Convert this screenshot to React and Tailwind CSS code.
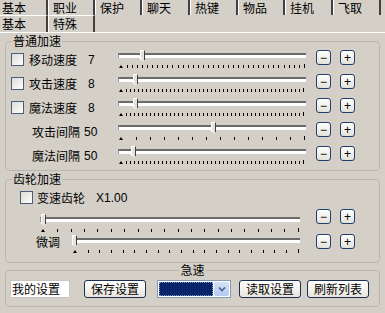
import React from "react";

const row1Tabs = [
  { t: "基本", w: "w-[48px]", first: true },
  { t: "职业", w: "w-[47px]" },
  { t: "保护", w: "w-[47px]" },
  { t: "聊天", w: "w-[48px]" },
  { t: "热键", w: "w-[48px]" },
  { t: "物品", w: "w-[47px]" },
  { t: "挂机", w: "w-[48px]" },
  { t: "飞取", w: "w-[48px]" },
];

// 滑块
function Slider({ width, thumb, ticks }) {
  return (
    <div className={`relative h-[18px] ${width}`}>
      <div className="mt-[3px] h-[5px] border-t-2 border-t-[#6b6b6b] border-l border-l-[#9a9a9a] bg-white" />
      <div className="mt-[6px] h-[4px] flex justify-between items-end pl-[1px] pr-[1px]">
        {Array.from({ length: ticks }).map((_, i) =>
          i === 0 ? (
            <div key={i} className="w-0 h-0 border-l-[2px] border-r-[2px] border-b-[3px] border-l-transparent border-r-transparent border-b-black" />
          ) : (
            <div key={i} className={`w-[1px] bg-black ${i === ticks - 1 ? "h-[4px]" : "h-[3px]"}`} />
          )
        )}
      </div>
      <div
        className="absolute top-0 w-[5px] h-[12px] bg-[#e6e3dc] border-l border-l-white border-r border-r-[#404040] border-t border-t-white [clip-path:polygon(0_0,100%_0,100%_78%,50%_100%,0_78%)]"
        style={{ left: thumb }}
      />
    </div>
  );
}

function PmButton({ children, className = "" }) {
  return (
    <div
      className={`w-[15px] h-[15px] rounded-[3px] border border-[#1f3f6e] bg-gradient-to-b from-white to-[#e4e1d8] flex items-center justify-center text-[12px] leading-none text-black font-['Liberation_Sans',sans-serif] ${className}`}
    >
      {children}
    </div>
  );
}

function CheckBox({ className = "" }) {
  return (
    <div className={`w-[13px] h-[13px] border border-[#4b5d77] bg-gradient-to-br from-[#dcdcd6] to-white ${className}`} />
  );
}

function XpButton({ children, className = "" }) {
  return (
    <div
      className={`h-[18px] rounded-[3px] border border-[#1c2f4e] bg-gradient-to-b from-white to-[#e8e5dd] flex items-center justify-center text-[12px] leading-[14px] text-black ${className}`}
    >
      {children}
    </div>
  );
}

const speedRows = [
  { label: "移动速度", val: "7", check: true, thumb: 22, ticks: 37 },
  { label: "攻击速度", val: "8", check: true, thumb: 15, ticks: 46 },
  { label: "魔法速度", val: "8", check: true, thumb: 15, ticks: 46 },
  { label: "攻击间隔", val: "50", check: false, thumb: 93, ticks: 14 },
  { label: "魔法间隔", val: "50", check: false, thumb: 13, ticks: 46 },
];

const num = "font-['Liberation_Sans',sans-serif] text-[12px]";

export default function App() {
  return (
    <div className="w-[385px] h-[313px] overflow-hidden bg-[#d4d0c8] text-black text-[12px] leading-[14px] font-['Noto_Sans_CJK_SC','Liberation_Sans',sans-serif]">
      {/* 标签页 第一行 */}
      <div className="flex h-[15px]">
        {row1Tabs.map((tab, i) => (
          <div
            key={i}
            className={`${tab.w} h-[15px] pt-[1px] border-r-2 border-r-[#404040] ${tab.first ? "pl-[2px]" : "border-l border-l-white pl-[4px]"}`}
          >
            {tab.t}
          </div>
        ))}
      </div>
      {/* 第二行 */}
      <div className="flex h-[17px]">
        <div className="w-[48px] h-[17px] border-t border-t-white border-r-2 border-r-[#404040] pl-[2px] pt-[1px]">基本</div>
        <div className="w-[47px] h-[17px] border-t border-t-white border-l border-l-white border-r-2 border-r-[#404040] pl-[4px] pt-[1px]">特殊</div>
      </div>

      <div className="border-t border-t-white">
        {/* 普通加速 */}
        <fieldset className="mx-[5px] mt-[1px] border border-[#bab7ae] rounded-[4px] pt-[2px]">
          <legend className="ml-[6px] px-[1px] leading-[14px]">普通加速</legend>
          {speedRows.map((r, i) => (
            <div key={i} className="flex items-start h-[24px]">
              {r.check ? (
                <>
                  <CheckBox className="ml-[5px] mt-[3px]" />
                  <div className="ml-[5px] w-[59px] mt-[3px]">{r.label}</div>
                  <div className={`w-[30px] mt-[3px] ${num}`}>{r.val}</div>
                </>
              ) : (
                <>
                  <div className="ml-[26px] w-[52px] mt-[3px]">{r.label}</div>
                  <div className={`w-[34px] mt-[3px] ${num}`}>{r.val}</div>
                </>
              )}
              <Slider width="w-[188px]" thumb={r.thumb} ticks={r.ticks} />
              <PmButton className="ml-[10px]">−</PmButton>
              <PmButton className="ml-[9px]">+</PmButton>
            </div>
          ))}
        </fieldset>

        {/* 齿轮加速 */}
        <fieldset className="mx-[5px] mt-[1px] border border-[#bab7ae] rounded-[4px] pb-[6px]">
          <legend className="ml-[6px] px-[1px] leading-[14px]">齿轮加速</legend>
          <div className="flex items-start h-[22px]">
            <CheckBox className="ml-[14px] mt-[5px]" />
            <div className="ml-[4px] mt-[5px]">变速齿轮</div>
            <div className={`ml-[11px] mt-[5px] ${num}`}>X1.00</div>
          </div>
          <div className="flex items-start h-[24px]">
            <Slider width="ml-[34px] mt-[6px] w-[260px]" thumb={1} ticks={20} />
            <PmButton className="ml-[16px] mt-[1px]">−</PmButton>
            <PmButton className="ml-[9px] mt-[1px]">+</PmButton>
          </div>
          <div className="flex items-start h-[24px]">
            <div className="ml-[30px] w-[36px] mt-[3px]">微调</div>
            <Slider width="mt-[3px] w-[228px]" thumb={0} ticks={20} />
            <PmButton className="ml-[16px] mt-[2px]">−</PmButton>
            <PmButton className="ml-[9px] mt-[2px]">+</PmButton>
          </div>
        </fieldset>

        {/* 急速 */}
        <fieldset className="mx-[5px] border border-[#bab7ae] rounded-[4px] pt-[3px] pb-[8px]">
          <legend className="mx-auto px-[1px] leading-[14px]">急速</legend>
          <div className="flex items-start">
            <div className="ml-[4px] w-[60px] h-[18px] bg-white border border-[#c9c6bf] pl-[1px] flex items-center">我的设置</div>
            <XpButton className="ml-[14px] w-[62px]">保存设置</XpButton>
            <div className="ml-[11px] w-[74px] h-[18px] bg-white border border-[#7f9db9] flex p-[1px]">
              <div className="flex-1 bg-[#0a246a] border border-dotted border-[#8090c0]" />
              <div className="w-[15px] ml-[1px] rounded-[2px] bg-gradient-to-b from-[#d6e2f9] to-[#b4c8f2] flex items-center justify-center">
                <svg width="8" height="6" viewBox="0 0 8 6">
                  <path d="M1 1.5 L4 4.5 L7 1.5" fill="none" stroke="#4d6185" strokeWidth="1.6" />
                </svg>
              </div>
            </div>
            <XpButton className="ml-[8px] w-[62px]">读取设置</XpButton>
            <XpButton className="ml-[6px] w-[62px]">刷新列表</XpButton>
          </div>
        </fieldset>
      </div>
    </div>
  );
}
